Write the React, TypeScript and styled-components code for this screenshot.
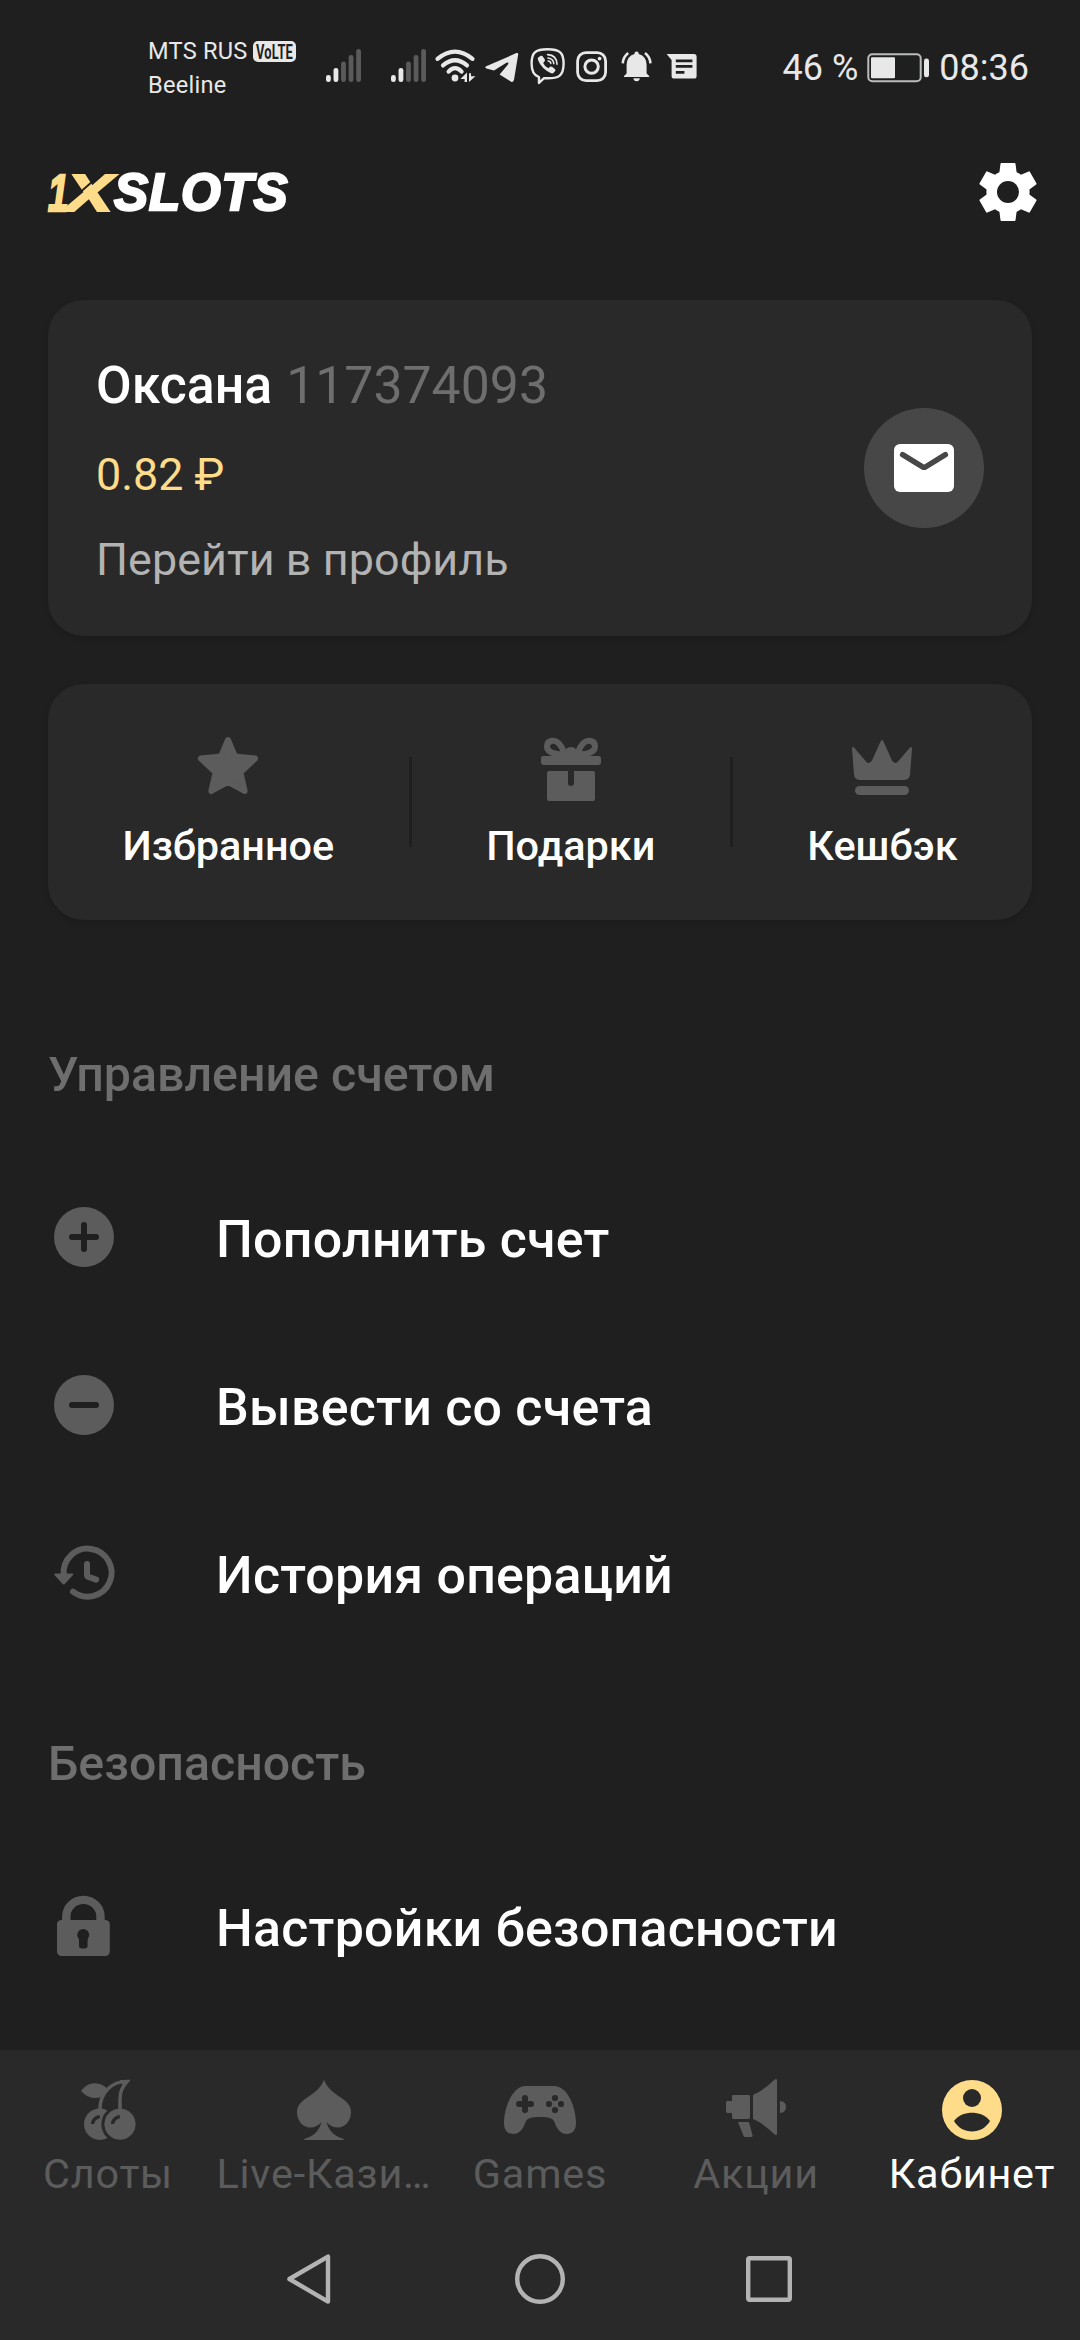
import React from "react";
import styled, { createGlobalStyle } from "styled-components";

const c = {
  bg: "#1f1f1f",
  panel: "#292929",
  icon: "#5c5c5c",
  muted: "#6e6e6e",
  soft: "#b3b3b3",
  gold: "#ffdc8a",
  status: "#e8e8e8",
  bubble: "#474747",
};

const GlobalStyle = createGlobalStyle`
  *, *::before, *::after { box-sizing: border-box; }
  html, body { margin: 0; padding: 0; background: ${c.bg}; }
  body { font-family: Roboto, "Noto Sans", sans-serif; color: #fff; }
  svg { display: block; flex: none; overflow: visible; }
`;

const Screen = styled.div`
  width: 1080px;
  height: 2340px;
  display: flex;
  flex-direction: column;
  background: ${c.bg};
  overflow: hidden;
`;

/* ---------- status bar ---------- */

const StatusBar = styled.header`
  height: 104px;
  display: flex;
  align-items: flex-start;
  padding: 34px 51px 0 148px;
  color: ${c.status};
`;

const Carriers = styled.div`
  width: 178px;
  display: flex;
  flex-direction: column;
`;

const Carrier = styled.div`
  height: 34px;
  display: flex;
  align-items: center;
  gap: 5px;
  font-size: 23.6px;
  line-height: 34px;
  letter-spacing: 0.25px;
  white-space: nowrap;
`;

const StatusIcons = styled.div`
  display: flex;
  padding-top: 12px;
`;

const StatusSvg = styled.svg<{ $gap?: number }>`
  height: 40px;
  margin-left: ${(p) => p.$gap ?? 0}px;
`;

const StatusRight = styled.div`
  margin-left: auto;
  height: 68px;
  display: flex;
  align-items: center;
  font-size: 36px;
  line-height: 64px;
  white-space: nowrap;
`;

const Percent = styled.span`
  margin-right: 9px;
`;

const Clock = styled.span`
  margin-left: 9px;
`;

/* ---------- header ---------- */

const Header = styled.div`
  height: 176px;
  margin-bottom: 20px;
  padding: 0 44px 0 48px;
  display: flex;
  align-items: center;
  justify-content: space-between;
`;

const Logo = styled.div`
  display: flex;
  align-items: center;
  padding-top: 1px;
  font-family: "Liberation Sans", Arial, sans-serif;
  font-size: 51px;
  line-height: 56px;
  font-weight: 700;
  font-style: italic;
`;

const LogoMark = styled.svg`
  margin-right: -8px;
  font-size: 51px;
`;

const LogoWord = styled.span`
  letter-spacing: 0.9px;
  color: #fff;
  -webkit-text-stroke: 2.4px #fff;
`;

/* ---------- cards ---------- */

const Card = styled.section`
  margin: 0 48px;
  background: ${c.panel};
  border-radius: 36px;
  box-shadow: 0 3px 6px rgba(0, 0, 0, 0.12);
`;

const ProfileCard = styled(Card)`
  height: 336px;
  margin-bottom: 48px;
  padding: 56px 48px 0;
  display: flex;
  justify-content: space-between;
`;

const ProfileInfo = styled.div`
  display: flex;
  flex-direction: column;
`;

const NameRow = styled.div`
  display: flex;
  gap: 14px;
  font-size: 51.75px;
  line-height: 60px;
  margin-bottom: 32px;
`;

const Name = styled.span`
  font-weight: 500;
`;

const AccountId = styled.span`
  color: ${c.muted};
`;

const Balance = styled.div`
  font-size: 44.85px;
  line-height: 54px;
  margin-bottom: 31px;
  color: ${c.gold};
`;

const ProfileLink = styled.div`
  font-size: 44.85px;
  line-height: 54px;
  letter-spacing: 0.08px;
  color: ${c.soft};
`;

const MailButton = styled.button`
  width: 120px;
  height: 120px;
  margin: 52px 0 0;
  padding: 0;
  border: 0;
  border-radius: 50%;
  background: ${c.bubble};
  display: flex;
  align-items: center;
  justify-content: center;
`;

const ShortcutCard = styled(Card)`
  height: 236px;
  display: flex;
`;

const Shortcut = styled.div`
  flex: 1 1 auto;
  padding-top: 48px;
  display: flex;
  flex-direction: column;
  align-items: center;
  gap: 18px;
`;

const ShortcutLabel = styled.span`
  font-size: 41.4px;
  line-height: 48px;
  font-weight: 500;
`;

const Divider = styled.div`
  width: 3px;
  height: 90px;
  margin-top: 73px;
  background: ${c.bg};
`;

/* ---------- menu ---------- */

const Menu = styled.main`
  flex: 1;
  min-height: 0;
  padding: 127px 48px 0;
  display: flex;
  flex-direction: column;
`;

const Section = styled.section`
  margin-bottom: 79px;
`;

const SectionTitle = styled.h2`
  margin: 0 0 50px;
  font-size: 48.3px;
  line-height: 56px;
  font-weight: 500;
  color: ${c.muted};
`;

const Row = styled.div`
  height: 168px;
  display: flex;
  align-items: center;
  gap: 96px;
`;

const RowLabel = styled.span`
  padding-top: 5px;
  font-size: 51.9px;
  line-height: 60px;
  letter-spacing: 0.25px;
  font-weight: 500;
  white-space: nowrap;
`;

/* ---------- bottom navigation ---------- */

const Bottom = styled.footer`
  height: 290px;
  background: ${c.panel};
  display: flex;
  flex-direction: column;
`;

const Tabs = styled.nav`
  height: 148px;
  padding-top: 24px;
  display: grid;
  grid-template-columns: repeat(5, 216px);
`;

const Tab = styled.div<{ $active?: boolean }>`
  display: flex;
  flex-direction: column;
  align-items: center;
  gap: 4px;
  color: ${(p) => (p.$active ? "#fff" : c.icon)};
`;

const TabLabel = styled.span`
  font-size: 41.4px;
  line-height: 48px;
  letter-spacing: 0.8px;
  white-space: nowrap;
`;

const SystemKeys = styled.div`
  flex: 1;
  padding-top: 51px;
  display: flex;
  justify-content: center;
  gap: 169px;
`;

/* ---------- icons ---------- */

const Box = ({ children, size = 72 }: { children: React.ReactNode; size?: number }) => (
  <svg width={size} height={size} viewBox={`0 0 ${size} ${size}`} fill={c.icon}>
    {children}
  </svg>
);

const Signal = ({ gap }: { gap?: number }) => (
  <StatusSvg $gap={gap} width={35} viewBox="0 0 35 40">
    {[7, 14, 20.5, 27, 33].map((h, i) => (
      <rect key={h} x={i * 7.55} y={36 - h} width={4.8} height={h} rx={2.3} fill={i < 2 ? c.status : "#5a5a5a"} />
    ))}
  </StatusSvg>
);

const Volte = () => (
  <svg width="43" height="21" viewBox="0 0 43 21">
    <rect width="43" height="21" rx="5" fill={c.status} />
    <text x="3" y="17.5" fontSize="19.5" fontWeight="700" textLength="37" lengthAdjust="spacingAndGlyphs" fill={c.bg}>
      VoLTE
    </text>
  </svg>
);

const Wifi = () => (
  <StatusSvg $gap={7} width={43} viewBox="0 0 43 40" fill="none" stroke={c.status} strokeWidth="4.2" strokeLinecap="round">
    <path d="M4.5 12.8Q22-1.6 39.5 12.8M10 19.4Q22 9 34 19.4M15.6 25.6Q22 18.6 28.6 25.6" />
    <circle cx="22" cy="32" r="3.4" fill={c.status} stroke="none" />
    <path d="M34 26.5V36H31.6V33H27.4ZM36 36V27.2H38V30.2H42.4Z" fill={c.status} stroke="none" />
  </StatusSvg>
);

const Telegram = () => (
  <StatusSvg $gap={8} width={35} viewBox="0 0 35 40" fill={c.status}>
    <path d="M2.2 20.3 32.4 7.1Q34.4 6.4 34.2 8.6L30 33.8Q29.3 37 26.8 35.4L15.6 28.4 24 18.4Q25.4 15.6 22.4 16.8L10 24.6 2.4 22.6Q.2 21.4 2.2 20.3Z" />
  </StatusSvg>
);

const Viber = () => (
  <StatusSvg $gap={9} width={37} viewBox="0 0 37 40" fill="none" stroke={c.status} strokeWidth="2.4" strokeLinecap="round" strokeLinejoin="round">
    <path d="M19.5 3.2C7 3.2 3.6 6.6 3.6 17.6 3.6 25.6 5.6 29.6 11 31.2V37L16 32.2C31 33 35.6 30 35.6 17.6 35.6 6.6 32 3.2 19.5 3.2Z" />
    <path d="M10.2 11.6 12.8 9.8Q13.8 9.3 14.8 10.6L16.8 13.4Q17.4 14.6 16.4 15.6L15.2 17Q16.6 20.6 20.4 22.2L22 20.8Q22.9 20.2 24 20.8L26.8 23Q28 24 27.2 25L25.4 27Q24.4 27.8 22.6 27 13.4 22.6 10 14 9.4 12.4 10.2 11.6Z" fill={c.status} stroke="none" />
    <path d="M19.6 8.6Q28.6 9 29 18.2M20 12Q25.4 12.6 25.8 17.6M20.2 15Q22.6 15.2 22.8 17.4" strokeWidth="1.6" />
  </StatusSvg>
);

const Instagram = () => (
  <StatusSvg $gap={11} width={31} viewBox="0 0 31 40" fill="none" stroke={c.status} strokeWidth="2.8">
    <rect x="1.6" y="6.6" width="28" height="28" rx="8.4" />
    <circle cx="15.6" cy="20.6" r="6.7" strokeWidth="3" />
    <circle cx="23.6" cy="12.6" r="1.9" fill={c.status} stroke="none" />
  </StatusSvg>
);

const BellIcon = () => (
  <StatusSvg $gap={14} width={31} viewBox="0 0 31 40" fill={c.status}>
    <path d="M15.6 5.6Q17.8 5.6 17.8 8 25.6 10.4 25.6 19V27.6L28.2 30V31H3V30L5.6 27.6V19Q5.6 10.4 13.4 8 13.4 5.6 15.6 5.6ZM12.4 32.2H18.8Q18.6 35.2 15.6 35.2T12.4 32.2Z" />
    <path d="M1.8 17.4Q2 11 7.2 7M29.4 17.4Q29.2 11 24 7" fill="none" stroke={c.status} strokeWidth="2.6" />
  </StatusSvg>
);

const MessageIcon = () => (
  <StatusSvg $gap={14} width={31} viewBox="0 0 31 40">
    <path d="M.6 8H28Q30.6 8 30.6 10.6V30Q30.6 32.6 28 32.6H8.2Q5.6 32.6 5.6 30V14Z" fill={c.status} />
    <path d="M9.8 14.8H26.4M9.8 20.4H26.4M9.8 26.4H18.4" stroke={c.bg} strokeWidth="2.8" />
  </StatusSvg>
);

const Battery = () => (
  <svg width="63" height="30" viewBox="0 0 63 30">
    <rect x="1.3" y="1.3" width="52.4" height="27" rx="4" fill="none" stroke="#b9bdb9" strokeWidth="2" />
    <rect x="4" y="4.3" width="24" height="21" rx="1" fill={c.status} />
    <rect x="57" y="5.6" width="5" height="18.6" rx="2.3" fill={c.status} />
  </svg>
);

const Gear = () => (
  <svg width="56" height="58" viewBox="-28 -29 56 58" fill="#fff">
    <mask id="gear-hole">
      <rect x="-30" y="-30" width="60" height="60" fill="#fff" />
      <circle r="11" fill="#000" />
    </mask>
    <g mask="url(#gear-hole)">
      <circle r="21.6" />
      {[0, 60, 120, 180, 240, 300].map((a) => (
        <path key={a} d="M-6.6-29H6.6Q7.4-29 7.5-28.2L8.8-18H-8.8L-7.5-28.2Q-7.4-29-6.6-29Z" transform={`rotate(${a})`} />
      ))}
    </g>
  </svg>
);

const Mail = () => (
  <svg width="60" height="48" viewBox="0 0 60 48">
    <rect width="60" height="48" rx="6" fill="#fff" />
    <path d="M8.6 10.6 28.6 22.9Q30 23.8 31.4 22.9L51.4 10.6" fill="none" stroke={c.bubble} strokeWidth="5.4" strokeLinecap="round" />
  </svg>
);

const Star = () => (
  <Box>
    <path
      d="M36 8 43 24.6 63 26.6 48.4 40.4 52.6 59 36 49.8 19.4 59 23.6 40.4 9 26.6 29 24.6Z"
      stroke={c.icon}
      strokeWidth="6"
      strokeLinejoin="round"
    />
  </Box>
);

const Gift = () => (
  <Box>
    <rect x="6" y="24" width="60" height="9" rx="2.4" />
    <path d="M14 39H33V51A3 3 0 0 0 39 51V39H58Q60 39 60 41V67Q60 69 58 69H14Q12 69 12 67V41Q12 39 14 39Z" />
    <path
      d="M29 22.4C17 22.4 12 19 12 14.6 12 8 19.4 7.4 23.4 11 26.6 14 28.4 18 29 22.4ZM43 22.4C55 22.4 60 19 60 14.6 60 8 52.6 7.4 48.6 11 45.4 14 43.6 18 43 22.4Z"
      fill="none"
      stroke={c.icon}
      strokeWidth="6"
      strokeLinejoin="round"
    />
    <path d="M28 25C29 18 32 15 36 15S43 18 44 25Z" />
  </Box>
);

const Crown = () => (
  <Box>
    <path d="M34.8 9Q36 7 37.2 9L46 28.6Q48.8 33 52 29.4L64 15.6Q66 14.2 66 16.6L64 42.6Q63.4 47.8 58.4 48H13.6Q8.6 47.8 8 42.6L6 16.6Q6 14.2 8 15.6L20 29.4Q23.2 33 26 28.6Z" />
    <rect x="9" y="54" width="54" height="9" rx="4.5" />
  </Box>
);

const Plus = () => (
  <Box>
    <circle cx="36" cy="36" r="30" />
    <path d="M24 36H48M36 24V48" stroke={c.bg} strokeWidth="6" strokeLinecap="round" />
  </Box>
);

const Minus = () => (
  <Box>
    <circle cx="36" cy="36" r="30" />
    <path d="M24 36H48" stroke={c.bg} strokeWidth="6" strokeLinecap="round" />
  </Box>
);

const History = () => (
  <Box>
    <path
      d="M15.7 38A24 24 0 1 1 25 54.7M39 27V38.6Q39 39.4 39.8 39.7L48.2 42.6"
      fill="none"
      stroke={c.icon}
      strokeWidth="6"
      strokeLinecap="round"
    />
    <path d="M7 36.4H24.4Q26 36.6 25 38L17 46.8Q15.7 48 14.4 46.8L6.4 38Q5.4 36.6 7 36.4Z" />
  </Box>
);

const Lock = () => (
  <Box>
    <path d="M18.3 32V26.4A17 16.4 0 0 1 52.5 26.4V32" fill="none" stroke={c.icon} strokeWidth="8.4" />
    <rect x="9" y="30" width="52.8" height="36" rx="4.5" />
    <circle cx="35.2" cy="45" r="6" fill={c.bg} />
    <rect x="31" y="46" width="8.6" height="12.4" rx="2.4" fill={c.bg} />
  </Box>
);

const Cherry = () => (
  <Box>
    <path d="M9 16.7Q15 9.3 22.7 9.3T36 15.4Q32.4 18.4 30.4 22.4 27 24 22.7 24 15 24 9 16.7Z" />
    <path d="M27.8 36C28 18 40 7.4 55 7.4 49.6 14 48 18 48 26V36" fill="none" stroke={c.icon} strokeWidth="3.4" />
    <path d="M48 6H58.4L52 14Z" />
    <circle cx="27.8" cy="50.2" r="15.8" />
    <circle cx="48" cy="50.2" r="17" stroke={c.panel} strokeWidth="3.2" />
    <path d="M48 30V36" stroke={c.icon} strokeWidth="3.4" />
    <circle cx="48" cy="50.2" r="15.4" />
    <path d="M40.6 50A7.4 7.4 0 0 1 47.8 42.8M20.6 50A7.4 7.4 0 0 1 27.8 42.8" fill="none" stroke={c.panel} strokeWidth="3.4" />
  </Box>
);

const Spade = () => (
  <Box>
    <path d="M36 6C39 14 46 19 52 23 58 27 63 31 63 38 63 47 57 53.5 50 53.5 45 53.5 41 51.5 38.5 48 41 57 46 62 55.5 64.8V66H16.5V64.8C26 62 31 57 33.5 48 31 51.5 27 53.5 22 53.5 15 53.5 9 47 9 38 9 31 14 27 20 23 26 19 33 14 36 6Z" />
  </Box>
);

const Gamepad = () => (
  <Box>
    <path d="M22 12H50C64 12 72 34 72 49 72 56 68.5 60 63 60 56 60 52.5 54 50.5 48 49 44 44 43 36 43S23 44 21.5 48C19.5 54 16 60 9 60 3.5 60 0 56 0 49 0 34 8 12 22 12Z" />
    <path d="M15 30H27M21 24V36" stroke={c.panel} strokeWidth="6" strokeLinecap="round" />
    <g fill={c.panel}>
      <circle cx="51" cy="24" r="3.1" />
      <circle cx="51" cy="36" r="3.1" />
      <circle cx="45" cy="30" r="3.1" />
      <circle cx="57" cy="30" r="3.1" />
    </g>
  </Box>
);

const Megaphone = () => (
  <Box>
    <path d="M7.4 27H12V22.4Q12 21 13.4 21H28.6Q30 21 30 22.4V43.6Q30 45 28.6 45H13.4Q12 45 12 43.6V39H7.4Q6 39 6 37.6V28.4Q6 27 7.4 27Z" />
    <path d="M33 21Q43 17 54.6 5.6 57 4 57 6.6V59.6Q57 62 54.6 60.4 43 49 33 45Z" />
    <path d="M18 48H28Q29 48 29.2 49L32.6 61.6Q32.8 63 31.6 63H25Q24 63 23.6 62Z" />
    <path d="M60 27Q66 27.6 66 33T60 39Z" />
  </Box>
);

const Account = () => (
  <Box>
    <circle cx="36" cy="36" r="30" fill={c.gold} />
    <circle cx="36" cy="24" r="9" fill={c.panel} />
    <path d="M18 47C22 40.8 30 38.7 36 38.7S50 40.8 54 47C50 54 43 57.5 36 57.5S22 54 18 47Z" fill={c.panel} />
  </Box>
);

const keyStroke = { fill: "none", stroke: c.soft, strokeWidth: 4.4, strokeLinejoin: "round" as const };

/* ---------- data ---------- */

const shortcuts = [
  { label: "Избранное", Icon: Star },
  { label: "Подарки", Icon: Gift },
  { label: "Кешбэк", Icon: Crown },
];

const sections = [
  {
    title: "Управление счетом",
    rows: [
      { label: "Пополнить счет", Icon: Plus },
      { label: "Вывести со счета", Icon: Minus },
      { label: "История операций", Icon: History },
    ],
  },
  { title: "Безопасность", rows: [{ label: "Настройки безопасности", Icon: Lock }] },
];

const tabs = [
  { label: "Слоты", Icon: Cherry },
  { label: "Live-Кази…", Icon: Spade },
  { label: "Games", Icon: Gamepad },
  { label: "Акции", Icon: Megaphone },
  { label: "Кабинет", Icon: Account, active: true },
];

export default function App() {
  return (
    <Screen>
      <GlobalStyle />
      <StatusBar>
        <Carriers>
          <Carrier>
            MTS RUS <Volte />
          </Carrier>
          <Carrier>Beeline</Carrier>
        </Carriers>
        <StatusIcons>
          <Signal />
          <Signal gap={30} />
          <Wifi />
          <Telegram />
          <Viber />
          <Instagram />
          <BellIcon />
          <MessageIcon />
        </StatusIcons>
        <StatusRight>
          <Percent>46 %</Percent>
          <Battery />
          <Clock>08:36</Clock>
        </StatusRight>
      </StatusBar>

      <Header>
        <Logo>
          <LogoMark width="74" height="56" viewBox="0 0 74 56" fill={c.gold} stroke={c.gold}>
            <text transform="translate(0 45.6) scale(0.72 1)" strokeWidth="2.4">
              1
            </text>
            <text transform="translate(18 45.6) scale(1.38 1)" strokeWidth="2">
              X
            </text>
            <path d="M33 26.5 49 12.5" stroke={c.bg} strokeWidth="1.8" />
          </LogoMark>
          <LogoWord>SLOTS</LogoWord>
        </Logo>
        <Gear />
      </Header>

      <ProfileCard>
        <ProfileInfo>
          <NameRow>
            <Name>Оксана</Name>
            <AccountId>117374093</AccountId>
          </NameRow>
          <Balance>0.82 ₽</Balance>
          <ProfileLink>Перейти в профиль</ProfileLink>
        </ProfileInfo>
        <MailButton>
          <Mail />
        </MailButton>
      </ProfileCard>

      <ShortcutCard>
        {shortcuts.map(({ label, Icon }, i) => (
          <React.Fragment key={label}>
            {i > 0 && <Divider />}
            <Shortcut>
              <Icon />
              <ShortcutLabel>{label}</ShortcutLabel>
            </Shortcut>
          </React.Fragment>
        ))}
      </ShortcutCard>

      <Menu>
        {sections.map(({ title, rows }) => (
          <Section key={title}>
            <SectionTitle>{title}</SectionTitle>
            {rows.map(({ label, Icon }) => (
              <Row key={label}>
                <Icon />
                <RowLabel>{label}</RowLabel>
              </Row>
            ))}
          </Section>
        ))}
      </Menu>

      <Bottom>
        <Tabs>
          {tabs.map(({ label, Icon, active }) => (
            <Tab key={label} $active={active}>
              <Icon />
              <TabLabel>{label}</TabLabel>
            </Tab>
          ))}
        </Tabs>
        <SystemKeys>
          <Box size={60}>
            <path d="M47 7.6V52.6L8.4 30Z" {...keyStroke} />
          </Box>
          <Box size={60}>
            <circle cx="30" cy="30" r="22.8" {...keyStroke} />
          </Box>
          <Box size={60}>
            <rect x="9.2" y="9.2" width="41.6" height="41.6" rx="1.5" {...keyStroke} />
          </Box>
        </SystemKeys>
      </Bottom>
    </Screen>
  );
}
